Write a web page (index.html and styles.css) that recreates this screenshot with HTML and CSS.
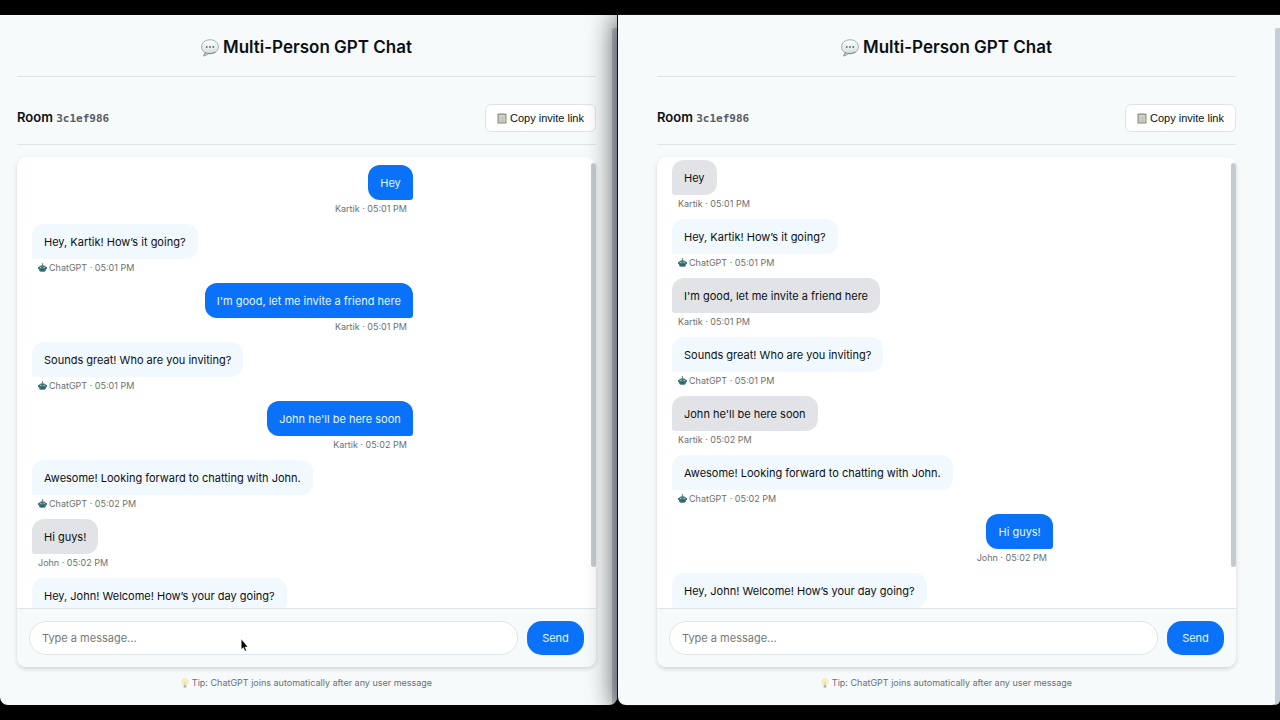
FILE: index.html
```html
<!DOCTYPE html>
<html lang="en">
<head>
<meta charset="utf-8">
<title>Multi-Person GPT Chat</title>
<link rel="stylesheet" href="styles.css">
</head>
<body>
<svg class="defs" aria-hidden="true">
  <defs>
    <linearGradient id="speech-fill" x1="0" y1="0" x2="0" y2="1">
      <stop offset="0" stop-color="#fdfefe"/>
      <stop offset="1" stop-color="#d3d7d8"/>
    </linearGradient>
    <symbol id="icon-speech" viewBox="0 0 18 18">
      <path d="M9 .8C4 .8.6 3.800.6 7.800c0 2.700 1.300 4.700 3.500 5.900-.1 1.300-.7 2.300-1.600 3.300 2.200-.1 3.800-1.100 4.900-2.300 6 .6 10-2.500 10-6.900C17.400 3.800 14 .8 9 .8z" fill="url(#speech-fill)" stroke="#9fa4a5" stroke-width=".9"/>
      <path d="M2.500 16.900c1-.9 1.700-2 1.700-3.200 2.700 1.300 7.300 1.200 10.200-.9" fill="none" stroke="#7b8081" stroke-width=".9"/>
      <g fill="#656a6b"><circle cx="5.700" cy="8" r=".9"/><circle cx="9" cy="8" r=".9"/><circle cx="12.300" cy="8" r=".9"/></g>
    </symbol>
    <symbol id="icon-clipboard" viewBox="0 0 10 11">
      <rect x=".5" y=".7" width="9" height="9.800" fill="#8c8a74"/>
      <rect x="1.600" y="2" width="6.900" height="7.400" fill="#cfd4d1"/>
      <rect x="3" y=".3" width="4" height="1.600" fill="#a5aaa9"/>
      <path d="M2.500 4h5M2.500 5.800h5M2.500 7.600h5" stroke="#b1b8b5" stroke-width=".7"/>
    </symbol>
    <symbol id="icon-robot" viewBox="0 0 9 9">
      <rect x="4" y=".6" width="1" height="2.200" fill="#6d8d92"/>
      <circle cx="4.500" cy="1" r=".8" fill="#8a7476"/>
      <path d="M1.300 3.200Q4.500 1.500 7.700 3.200V4H9V6H8.300Q7.900 8.700 6.400 8.700H2.600Q1.100 8.700.7 6H0V4H1.300z" fill="#42777b"/>
      <path d="M2 4.400h1.500M5.500 4.400H7" stroke="#a8d4d3" stroke-width=".9"/>
      <path d="M2.500 6.900h4" stroke="#274f5d" stroke-width="1"/>
    </symbol>
    <symbol id="icon-bulb" viewBox="0 0 8 10">
      <path d="M4 .6C2 .6.9 1.900.9 3.500c0 1.700 1.500 2.300 1.700 3.800h2.800C5.600 5.800 7.100 5.200 7.100 3.500 7.100 1.900 6 .6 4 .6z" fill="#f8efbd" stroke="#e2d8a4" stroke-width=".5"/>
      <path d="M3.200 4l.8 1 .8-1M4 5v2" fill="none" stroke="#d5bd6d" stroke-width=".5"/>
      <rect x="2.700" y="7.300" width="2.600" height="2.200" rx=".6" fill="#a7aaa6"/>
    </symbol>
  </defs>
</svg>

<div class="desktop">
  <section class="window window-left">
    <main class="app">
      <header class="app-header">
        <h1 class="app-title"><svg class="icon-speech"><use href="#icon-speech"/></svg>Multi-Person GPT Chat</h1>
      </header>
      <div class="room-bar">
        <h2 class="room-name">Room <code class="room-id">3c1ef986</code></h2>
        <button class="copy-button" type="button"><svg class="icon-clipboard"><use href="#icon-clipboard"/></svg>Copy invite link</button>
      </div>
      <div class="panel">
        <div class="messages">
          <article class="message own"><p class="bubble">Hey</p><p class="meta">Kartik · 05:01 PM</p></article>
          <article class="message bot"><p class="bubble">Hey, Kartik! How’s it going?</p><p class="meta"><svg class="icon-robot"><use href="#icon-robot"/></svg>ChatGPT · 05:01 PM</p></article>
          <article class="message own"><p class="bubble">I'm good, let me invite a friend here</p><p class="meta">Kartik · 05:01 PM</p></article>
          <article class="message bot"><p class="bubble">Sounds great! Who are you inviting?</p><p class="meta"><svg class="icon-robot"><use href="#icon-robot"/></svg>ChatGPT · 05:01 PM</p></article>
          <article class="message own"><p class="bubble">John he'll be here soon</p><p class="meta">Kartik · 05:02 PM</p></article>
          <article class="message bot"><p class="bubble">Awesome! Looking forward to chatting with John.</p><p class="meta"><svg class="icon-robot"><use href="#icon-robot"/></svg>ChatGPT · 05:02 PM</p></article>
          <article class="message"><p class="bubble">Hi guys!</p><p class="meta">John · 05:02 PM</p></article>
          <article class="message bot"><p class="bubble">Hey, John! Welcome! How’s your day going?</p></article>
          <span class="thumb"></span>
        </div>
        <form class="composer">
          <input class="composer-input" type="text" placeholder="Type a message..." aria-label="Message">
          <button class="send-button" type="button">Send</button>
        </form>
      </div>
      <p class="tip"><svg class="icon-bulb"><use href="#icon-bulb"/></svg>Tip: ChatGPT joins automatically after any user message</p>
    </main>
    <div class="page-scroll"></div>
    <svg class="cursor" viewBox="0 0 8 13"><path d="M1 1v9.500l2-1.700 1.400 3.300 1.400-.6-1.400-3.200h2.700z" fill="#000" stroke="#fff" stroke-width=".4"/></svg>
  </section>

  <section class="window window-right">
    <main class="app">
      <header class="app-header">
        <h1 class="app-title"><svg class="icon-speech"><use href="#icon-speech"/></svg>Multi-Person GPT Chat</h1>
      </header>
      <div class="room-bar">
        <h2 class="room-name">Room <code class="room-id">3c1ef986</code></h2>
        <button class="copy-button" type="button"><svg class="icon-clipboard"><use href="#icon-clipboard"/></svg>Copy invite link</button>
      </div>
      <div class="panel">
        <div class="messages scrolled">
          <article class="message"><p class="bubble">Hey</p><p class="meta">Kartik · 05:01 PM</p></article>
          <article class="message bot"><p class="bubble">Hey, Kartik! How’s it going?</p><p class="meta"><svg class="icon-robot"><use href="#icon-robot"/></svg>ChatGPT · 05:01 PM</p></article>
          <article class="message"><p class="bubble">I'm good, let me invite a friend here</p><p class="meta">Kartik · 05:01 PM</p></article>
          <article class="message bot"><p class="bubble">Sounds great! Who are you inviting?</p><p class="meta"><svg class="icon-robot"><use href="#icon-robot"/></svg>ChatGPT · 05:01 PM</p></article>
          <article class="message"><p class="bubble">John he'll be here soon</p><p class="meta">Kartik · 05:02 PM</p></article>
          <article class="message bot"><p class="bubble">Awesome! Looking forward to chatting with John.</p><p class="meta"><svg class="icon-robot"><use href="#icon-robot"/></svg>ChatGPT · 05:02 PM</p></article>
          <article class="message own"><p class="bubble">Hi guys!</p><p class="meta">John · 05:02 PM</p></article>
          <article class="message bot"><p class="bubble">Hey, John! Welcome! How’s your day going?</p></article>
          <span class="thumb"></span>
        </div>
        <form class="composer">
          <input class="composer-input" type="text" placeholder="Type a message..." aria-label="Message">
          <button class="send-button" type="button">Send</button>
        </form>
      </div>
      <p class="tip"><svg class="icon-bulb"><use href="#icon-bulb"/></svg>Tip: ChatGPT joins automatically after any user message</p>
    </main>
    <div class="page-scroll"></div>
  </section>
</div>
</body>
</html>
```
FILE: styles.css
```css
* { box-sizing: border-box; }

body {
  margin: 0;
  background: #000;
  color: #0c1013;
  font-family: Inter, "Liberation Sans", sans-serif;
}

h1, h2, p { margin: 0; }

.defs { position: absolute; width: 0; height: 0; }

/* Two browser windows side by side */
.desktop {
  display: grid;
  grid-template-columns: 617fr 662fr;
  gap: 1px;
  height: 100vh;
  padding: 15px 0;
  overflow: hidden;
}

.window {
  position: relative;
  display: flex;
  min-width: 0;
  background: #f6fafb;
  border-radius: 0 0 8px 8px;
}

.window-left { overflow: hidden; }

/* The right window is in front and shades the left one */
.window-right { box-shadow: 0 0 0 1px #111, 0 4px 28px 2px rgba(0, 0, 0, 0.75); }
.window-right .page-scroll { border-bottom-right-radius: 8px; }

.page-scroll {
  width: 5px;
  margin-top: 13px;
  background: #c6ced6;
  border-top-left-radius: 3px;
}

.app {
  display: flex;
  flex: 1;
  flex-direction: column;
  max-width: 579px;
  min-width: 0;
  margin: 0 auto;
}

.window-left .app { margin: 0 16px 0 17px; }

.app-header {
  padding: 20px 0 16px;
  border-bottom: 1px solid #dfe4e6;
}

.app-title {
  display: flex;
  align-items: center;
  justify-content: center;
  gap: 4px;
  font-size: 17px;
  font-weight: 600;
  line-height: 25px;
}

.icon-speech { width: 18px; height: 18px; }

.room-bar {
  display: flex;
  align-items: center;
  justify-content: space-between;
  margin: 15px 0 12px;
  padding: 12px 0;
  border-bottom: 1px solid #dfe4e6;
}

.room-name { font-size: 13px; font-weight: 600; line-height: 22px; }

.room-id {
  color: #555d60;
  font-family: "DejaVu Sans Mono", monospace;
  font-size: 11px;
}

.copy-button {
  display: flex;
  align-items: center;
  gap: 3px;
  height: 28px;
  padding: 0 11px;
  border: 1px solid #e0e4e6;
  border-radius: 6px;
  background: #fff;
  color: #0c1013;
  font-family: "Liberation Sans", Arial, sans-serif;
  font-size: 11px;
}

.icon-clipboard { width: 10px; height: 11px; }

.panel {
  display: flex;
  flex: 1;
  flex-direction: column;
  min-height: 0;
  overflow: hidden;
  border-radius: 9px;
  background: #fff;
  box-shadow: 0 2px 4px rgba(0, 0, 0, 0.15);
}

.messages {
  position: relative;
  display: flex;
  flex: 1;
  flex-direction: column;
  gap: 9px;
  min-height: 0;
  overflow: hidden;
  padding: 8px 20px 0 15px;
}

.messages.scrolled { padding-top: 3px; }

.thumb {
  position: absolute;
  top: 6px;
  right: 0;
  bottom: 41px;
  width: 5px;
  border-radius: 3px;
  background: #c4cbd0;
}

.message {
  display: flex;
  flex: none;
  flex-direction: column;
  align-items: flex-start;
  gap: 2px;
  width: 70%;
}

.message.own { align-items: flex-end; }

.bubble {
  padding: 9px 12px 8px;
  border-radius: 12px 12px 12px 3px;
  background: #e1e3e6;
  font-size: 11px;
  line-height: 18px;
}

.bot .bubble { background: #f1f8fe; }

.own .bubble {
  border-radius: 12px 12px 3px 12px;
  background: #0a72f8;
  color: #e6f5ff;
}

.meta {
  display: flex;
  align-items: center;
  gap: 2px;
  padding: 0 6px;
  color: #6b7073;
  font-size: 9px;
  line-height: 13px;
}

.icon-robot { width: 9px; height: 9px; }

.composer {
  display: flex;
  gap: 9px;
  padding: 12px;
  border-top: 1px solid #dfe4e6;
  background: #f6fafb;
}

.composer-input {
  flex: 1;
  min-width: 0;
  height: 34px;
  padding: 0 12px;
  border: 1px solid #e0e4e6;
  border-radius: 17px;
  background: #fff;
  font-family: inherit;
  font-size: 11px;
}

.composer-input::placeholder { color: #73787b; }

.send-button {
  width: 57px;
  height: 34px;
  padding: 0;
  border: 0;
  border-radius: 15px;
  background: #0a72f8;
  color: #e6f5ff;
  font-family: inherit;
  font-size: 11px;
}

.tip {
  display: flex;
  align-items: center;
  justify-content: center;
  gap: 3px;
  padding: 9px 0 15px;
  color: #6b7073;
  font-size: 9px;
  line-height: 14px;
}

.icon-bulb { width: 8px; height: 10px; }

.cursor {
  position: absolute;
  top: 623px;
  left: 240px;
  width: 9px;
  height: 14px;
}
```
